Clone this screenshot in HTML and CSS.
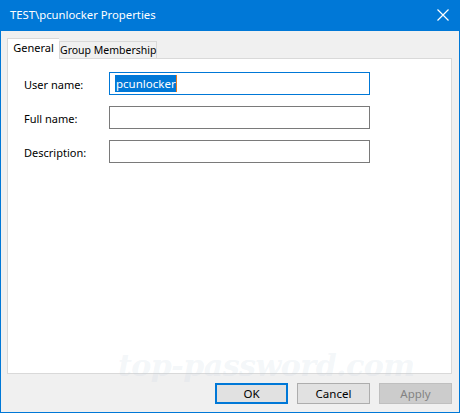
FILE: index.html
```html
<!DOCTYPE html>
<html>
<head>
<meta charset="utf-8">
<link rel="stylesheet" href="styles.css">
</head>
<body>
<div class="window">
  <div class="titlebar">
    <span class="title">TEST\pcunlocker Properties</span>
    <svg class="close" width="12" height="12" viewBox="0 0 12 12"><path d="M0.5 0.5 L11.5 11.5 M11.5 0.5 L0.5 11.5" stroke="#fff" stroke-width="1.2"/></svg>
  </div>
  <div class="body">
    <div class="tabs">
      <div class="tab active">General</div>
      <div class="tab second">Group Membership</div>
    </div>
    <div class="panel">
      <div class="row">
        <label class="label">User name:</label>
        <div class="input focused"><span class="sel">pcunlocker</span><span class="caret"></span></div>
      </div>
      <div class="row">
        <label class="label">Full name:</label>
        <div class="input"></div>
      </div>
      <div class="row">
        <label class="label">Description:</label>
        <div class="input"></div>
      </div>
    </div>
    <div class="buttons">
      <div class="btn default">OK</div>
      <div class="btn">Cancel</div>
      <div class="btn disabled">Apply</div>
    </div>
    <div class="watermark">top-password.com</div>
  </div>
</div>
</body>
</html>
```

FILE: styles.css
```css
* { box-sizing: border-box; }
html, body { margin: 0; padding: 0; }
body {
  width: 460px;
  height: 413px;
  font-family: "Noto Sans", "Open Sans", sans-serif;
  font-size: 11px;
  color: #000;
  overflow: hidden;
}
.window {
  width: 460px;
  height: 413px;
  display: flex;
  flex-direction: column;
  border: 1px solid #0078d7;
  border-top: none;
  background: #f0f0f0;
}
.titlebar {
  height: 31px;
  margin: 0 -1px;
  background: #0078d7;
  color: #fff;
  display: flex;
  align-items: center;
  justify-content: space-between;
  padding: 0 10px 0 10px;
  font-size: 11.3px;
}
.title { line-height: 1; margin-top: -1px; }
.close { margin-right: 1px; margin-top: -1px; }
.body {
  position: relative;
  flex: 1;
  padding: 7px 7px 0 6px;
  display: flex;
  flex-direction: column;
}
.tabs {
  display: flex;
  align-items: flex-end;
  height: 20px;
  position: relative;
  z-index: 1;
}
.tab {
  border: 1px solid #d9d9d9;
  border-bottom: none;
  background: #f0f0f0;
  height: 17px;
  line-height: 16px;
  text-align: center;
  white-space: nowrap;
}
.tab.active {
  background: #fff;
  width: 52px;
  height: 21px;
  line-height: 18px;
  margin-bottom: -1px;
  border-right: none;
}
.tab.second {
  width: 98px;
  font-size: 10.5px;
  line-height: 17px;
}
.panel {
  background: #fff;
  border: 1px solid #d9d9d9;
  height: 316px;
  padding: 13px 0 0 16px;
  display: flex;
  flex-direction: column;
  gap: 11px;
}
.row {
  display: flex;
  align-items: center;
  height: 23px;
}
.label {
  width: 85px;
  padding-top: 1px;
}
.input {
  width: 261px;
  height: 23px;
  border: 1px solid #7a7a7a;
  background: #fff;
  display: flex;
  align-items: center;
  padding-left: 5px;
}
.input.focused { border-color: #0078d7; }
.sel {
  background: #0078d7;
  color: #fff;
  line-height: 17px;
  height: 17px;
  padding: 0 0 0 1px;
  font-size: 11.5px;
}
.caret {
  width: 1px;
  height: 17px;
  background: #e87b22;
}
.buttons {
  display: flex;
  justify-content: flex-end;
  gap: 9px;
  margin-top: 9px;
}
.btn {
  width: 73px;
  height: 21px;
  border: 1px solid #adadad;
  background: #e1e1e1;
  display: flex;
  align-items: center;
  justify-content: center;
  font-size: 11.5px;
}
.btn.default { border: 2px solid #0078d7; }
.btn.disabled {
  background: #cccccc;
  border-color: #bfbfbf;
  color: #838383;
}
.watermark {
  position: absolute;
  left: 117px;
  top: 317px;
  font-family: "DejaVu Serif", serif;
  font-weight: bold;
  font-style: italic;
  font-size: 30px;
  color: rgba(190, 205, 222, 0.18);
  pointer-events: none;
  letter-spacing: -0.5px;
}
```
